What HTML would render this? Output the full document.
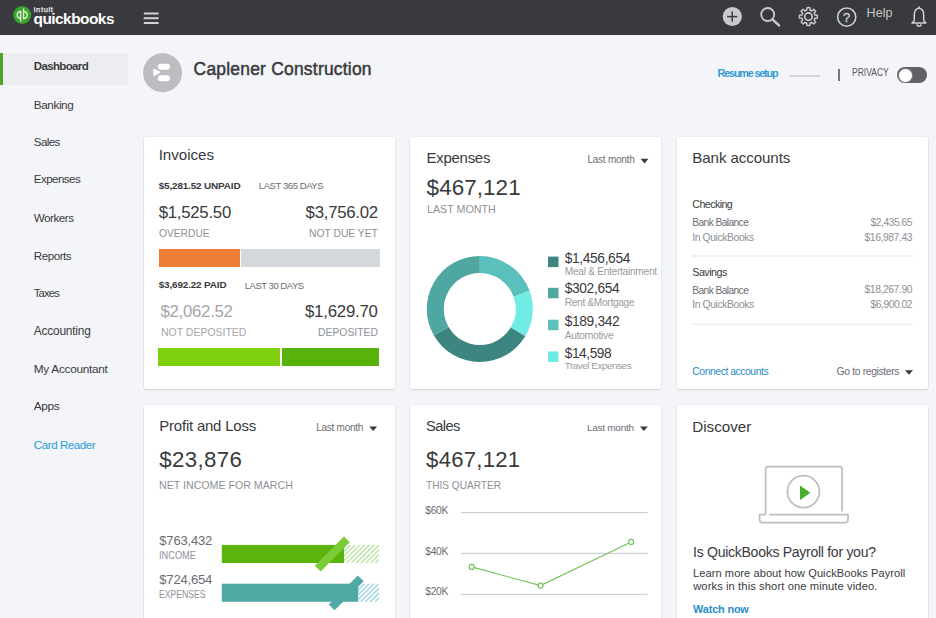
<!DOCTYPE html>
<html><head><meta charset="utf-8">
<style>
*{margin:0;padding:0;box-sizing:border-box}
html,body{width:936px;height:618px;overflow:hidden;background:#f4f5f8;font-family:"Liberation Sans",sans-serif}
.t{position:absolute;white-space:nowrap}
.a{position:absolute}
.card{position:absolute;background:#fff;border-radius:2px;box-shadow:0 0 0 0.5px rgba(0,0,0,0.06),0 1px 2px rgba(0,0,0,0.13)}
</style></head><body>
<!-- top bar -->
<div class="a" style="left:0;top:0;width:936px;height:35px;background:#393a3d"></div>
<svg class="a" style="left:0;top:0" width="936" height="35" viewBox="0 0 936 35">
  <!-- logo -->
  <circle cx="22.2" cy="15" r="9" fill="#3aa52e"/>
  <g fill="none" stroke="#e8f5e0" stroke-width="1.3">
    <path d="M20.5 11.5 A3.3 3.3 0 1 0 20.5 18.3 M19.3 11.5 H20.7 V21.5"/>
    <path d="M23.8 18.5 A3.3 3.3 0 1 0 23.8 11.7 M25 18.5 H23.6 V8.5"/>
  </g>
  <!-- hamburger -->
  <g stroke="#d2d2d4" stroke-width="2">
    <line x1="143.8" y1="13.5" x2="158.6" y2="13.5"/>
    <line x1="143.8" y1="18.2" x2="158.6" y2="18.2"/>
    <line x1="143.8" y1="23" x2="158.6" y2="23"/>
  </g>
  <!-- plus -->
  <circle cx="732.3" cy="16.5" r="9.6" fill="#c9cacc"/>
  <g stroke="#393a3d" stroke-width="1.5"><line x1="727.1" y1="16.6" x2="737.3" y2="16.6"/><line x1="732.2" y1="11.5" x2="732.2" y2="21.7"/></g>
  <!-- search -->
  <g fill="none" stroke="#c9cacc" stroke-width="1.8" stroke-linecap="round">
    <circle cx="767.7" cy="14.5" r="6.5"/>
    <line x1="772.6" y1="19.6" x2="779" y2="25.4" stroke-width="2.6"/>
  </g>
  <!-- gear -->
  <g fill="none" stroke="#c8c9cb" stroke-width="1.5" stroke-linejoin="round">
    <path d="M806.69 10.22 L806.99 7.71 A9.0 9.0 0 0 1 809.81 7.71 L810.11 10.22 A6.6 6.6 0 0 1 811.70 10.88 L811.70 10.88 L813.69 9.32 A9.0 9.0 0 0 1 815.68 11.31 L814.12 13.30 A6.6 6.6 0 0 1 814.78 14.89 L814.78 14.89 L817.29 15.19 A9.0 9.0 0 0 1 817.29 18.01 L814.78 18.31 A6.6 6.6 0 0 1 814.12 19.90 L814.12 19.90 L815.68 21.89 A9.0 9.0 0 0 1 813.69 23.88 L811.70 22.32 A6.6 6.6 0 0 1 810.11 22.98 L810.11 22.98 L809.81 25.49 A9.0 9.0 0 0 1 806.99 25.49 L806.69 22.98 A6.6 6.6 0 0 1 805.10 22.32 L805.10 22.32 L803.11 23.88 A9.0 9.0 0 0 1 801.12 21.89 L802.68 19.90 A6.6 6.6 0 0 1 802.02 18.31 L802.02 18.31 L799.51 18.01 A9.0 9.0 0 0 1 799.51 15.19 L802.02 14.89 A6.6 6.6 0 0 1 802.68 13.30 L802.68 13.30 L801.12 11.31 A9.0 9.0 0 0 1 803.11 9.32 L805.10 10.88 A6.6 6.6 0 0 1 806.69 10.22 Z"/>
    <circle cx="808.4" cy="16.6" r="3.7" stroke-width="1.7"/>
  </g>
  <!-- help circle -->
  <circle cx="846.7" cy="17.1" r="9.1" fill="none" stroke="#d0d0d2" stroke-width="1.6"/>
  <text x="846.7" y="21.7" text-anchor="middle" font-family="Liberation Sans" font-weight="normal" font-size="13" fill="#cdced0" stroke="#cdced0" stroke-width="0.35">?</text>
  <!-- bell -->
  <path d="M919 8 C915.2 8.8 914.3 11.5 914.3 15 V19.5 C914.3 21.3 913 22.3 912 23 H926 C925 22.3 923.7 21.3 923.7 19.5 V15 C923.7 11.5 922.8 8.8 919 8 Z" fill="none" stroke="#d0d0d2" stroke-width="1.5" stroke-linejoin="round"/>
  <path d="M917 24.2 A2 2 0 0 0 921 24.2" fill="none" stroke="#d0d0d2" stroke-width="1.5"/>
  <line x1="919" y1="6.5" x2="919" y2="8" stroke="#d0d0d2" stroke-width="1.5"/>
</svg>

<!-- sidebar highlight -->
<div class="a" style="left:0;top:53px;width:128px;height:32px;background:#ecedf0;border-radius:0 2px 2px 0"></div>
<div class="a" style="left:0;top:53px;width:3px;height:32px;background:#4aa71e"></div>

<!-- company avatar -->
<svg class="a" style="left:142px;top:52px" width="42" height="42" viewBox="0 0 42 42">
  <circle cx="20.6" cy="20.7" r="19.5" fill="#bcbdc0"/>
  <rect x="15.8" y="11.8" width="12.2" height="6" rx="3" fill="#fff"/>
  <rect x="15.8" y="23.2" width="12.2" height="6" rx="3" fill="#fff"/>
  <path d="M12 17.2 L17.8 20.3 L12 23.4 Z" fill="#fff" stroke="#fff" stroke-width="1.2" stroke-linejoin="round"/>
</svg>

<!-- header right -->
<div class="a" style="left:789px;top:75px;width:31px;height:2px;background:#d4d5d8"></div>
<div class="a" style="left:838.2px;top:69.3px;width:1.5px;height:11.5px;background:#77787c"></div>
<div class="a" style="left:897.3px;top:67.3px;width:29.4px;height:15.3px;border-radius:8px;background:#616265"></div>
<div class="a" style="left:898.6px;top:68.5px;width:13px;height:13px;border-radius:50%;background:#fff;box-shadow:0 0 0 0.6px #9a9b9e"></div>

<!-- cards -->
<div class="card" style="left:144px;top:137px;width:251px;height:252px"></div>
<div class="card" style="left:410px;top:137px;width:251px;height:252px"></div>
<div class="card" style="left:677px;top:137px;width:251px;height:252px"></div>
<div class="card" style="left:144px;top:405px;width:251px;height:220px"></div>
<div class="card" style="left:410px;top:405px;width:251px;height:220px"></div>
<div class="card" style="left:677px;top:405px;width:251px;height:220px"></div>

<!-- invoices bars -->
<div class="a" style="left:158.7px;top:248.5px;width:81px;height:18px;background:#ee7d35"></div>
<div class="a" style="left:240.7px;top:248.5px;width:139px;height:18px;background:#d4d7dc"></div>
<div class="a" style="left:158.2px;top:348px;width:122px;height:17.5px;background:#7fd10d"></div>
<div class="a" style="left:282.4px;top:348px;width:96.8px;height:17.5px;background:#59b20c"></div>

<!-- expenses arrow -->
<svg class="a" style="left:0;top:0" width="936" height="618" viewBox="0 0 936 618">
  <path d="M640.6 158.8 H648.4 L644.5 163.4 Z" fill="#393a3d"/>
  <path d="M369.3 426.5 H377.1 L373.2 431.1 Z" fill="#393a3d"/>
  <path d="M640 426.5 H647.8 L643.9 431.1 Z" fill="#393a3d"/>
  <path d="M905 370.2 H913 L909 374.8 Z" fill="#393a3d"/>
  <!-- donut -->
  <g><path d="M479.80 256.00 A53 53 0 0 1 529.60 290.87 L513.63 296.69 A36 36 0 0 0 479.80 273.00 Z" fill="#5bc0bb"/><path d="M529.60 290.87 A53 53 0 0 1 525.23 336.30 L510.66 327.54 A36 36 0 0 0 513.63 296.69 Z" fill="#70ebe6"/><path d="M525.23 336.30 A53 53 0 0 1 433.90 335.50 L448.62 327.00 A36 36 0 0 0 510.66 327.54 Z" fill="#3d8580"/><path d="M433.90 335.50 A53 53 0 0 1 479.80 256.00 L479.80 273.00 A36 36 0 0 0 448.62 327.00 Z" fill="#4ea7a1"/></g>
  <!-- legend squares -->
  <rect x="548" y="256.6" width="10.5" height="10.5" fill="#3d8580"/>
  <rect x="548" y="287.8" width="10.5" height="10.5" fill="#4ea7a1"/>
  <rect x="548" y="319.7" width="10.5" height="10.5" fill="#5bc0bb"/>
  <rect x="548" y="351.4" width="10.5" height="10.5" fill="#6eeae5"/>
  <!-- bank separators -->
  <rect x="692" y="255.5" width="221" height="1" fill="#e3e4e7"/>
  <rect x="692" y="323.7" width="221" height="1" fill="#e3e4e7"/>
  <!-- sales grid -->
  <rect x="461" y="512" width="186.5" height="1.3" fill="#cfd1d5"/>
  <rect x="461" y="552.8" width="186.5" height="1.3" fill="#cfd1d5"/>
  <rect x="461" y="593.8" width="186.5" height="1.3" fill="#cfd1d5"/>
  <polyline points="471.7,566.9 540.6,585.6 631.2,541.9" fill="none" stroke="#74c35a" stroke-width="1.1"/>
  <g fill="#fff" stroke="#74c35a" stroke-width="1.2">
    <circle cx="471.7" cy="566.9" r="2.5"/>
    <circle cx="540.6" cy="585.6" r="2.5"/>
    <circle cx="631.2" cy="541.9" r="2.5"/>
  </g>
  <!-- P&L bars -->
  <defs>
    <pattern id="hg" patternUnits="userSpaceOnUse" width="3.4" height="3.4" patternTransform="rotate(45)">
      <rect width="3.4" height="3.4" fill="#fff"/><rect x="0" width="1.1" height="3.4" fill="#a7dc88"/>
    </pattern>
    <pattern id="ht" patternUnits="userSpaceOnUse" width="3.4" height="3.4" patternTransform="rotate(45)">
      <rect width="3.4" height="3.4" fill="#fff"/><rect x="0" width="1.1" height="3.4" fill="#82c7d6"/>
    </pattern>
  </defs>
  <rect x="221.8" y="544.9" width="122.2" height="18.1" fill="#5bb30b"/>
  <rect x="344" y="544.9" width="35.1" height="18.1" fill="url(#hg)"/>
  <rect x="-20.6" y="-4.1" width="41.2" height="8.2" fill="#7ccc3a" transform="translate(332.3 554) rotate(-45)"/>
  <rect x="221.8" y="583.7" width="136.7" height="18.1" fill="#4fa9a5"/>
  <rect x="358.5" y="583.7" width="20.6" height="18.1" fill="url(#ht)"/>
  <rect x="-20.6" y="-4.1" width="41.2" height="8.2" fill="#4fa9a5" transform="translate(346.2 592.9) rotate(-45)"/>
  <!-- discover laptop -->
  <g fill="none" stroke="#bdbec1" stroke-width="1.7">
    <path d="M765.7 514.3 V468.8 Q765.7 466.6 767.9 466.6 H839.8 Q842 466.6 842 468.8 V511.5"/>
    <path d="M765.7 514.6 H759.6 V519.5 Q759.6 522.6 762.7 522.6 H844.9 Q848 522.6 848 519.5 V514.6 H769.4"/>
    <circle cx="803.4" cy="491.6" r="16"/>
  </g>
  <path d="M800 485.5 L810.3 492.8 L800 500.2 Z" fill="#4cae31"/>
</svg>

<div class="t" style="left:33.50px;top:11.17px;font-size:15.40px;line-height:15.40px;letter-spacing:-0.504px;color:#ffffff;font-weight:bold;">quickbooks</div>
<div class="t" style="left:33.80px;top:6.31px;font-size:7.43px;line-height:7.43px;letter-spacing:0.665px;color:#f0f0f0;font-weight:normal;-webkit-text-stroke:0.25px #f0f0f0">intuit</div>
<div class="t" style="left:866.50px;top:6.99px;font-size:12.54px;line-height:12.54px;letter-spacing:0.077px;color:#c4c5c7;font-weight:normal;">Help</div>
<div class="t" style="left:33.80px;top:60.75px;font-size:11.51px;line-height:11.51px;letter-spacing:-0.646px;color:#393a3d;font-weight:bold;">Dashboard</div>
<div class="t" style="left:33.80px;top:98.97px;font-size:11.73px;line-height:11.73px;letter-spacing:-0.401px;color:#393a3d;font-weight:normal;">Banking</div>
<div class="t" style="left:33.80px;top:136.53px;font-size:11.54px;line-height:11.54px;letter-spacing:-0.590px;color:#393a3d;font-weight:normal;">Sales</div>
<div class="t" style="left:33.80px;top:174.39px;font-size:11.59px;line-height:11.59px;letter-spacing:-0.552px;color:#393a3d;font-weight:normal;">Expenses</div>
<div class="t" style="left:33.80px;top:211.93px;font-size:11.66px;line-height:11.66px;letter-spacing:-0.480px;color:#393a3d;font-weight:normal;">Workers</div>
<div class="t" style="left:33.80px;top:249.76px;font-size:11.62px;line-height:11.62px;letter-spacing:-0.481px;color:#393a3d;font-weight:normal;">Reports</div>
<div class="t" style="left:33.80px;top:287.94px;font-size:11.29px;line-height:11.29px;letter-spacing:-0.866px;color:#393a3d;font-weight:normal;">Taxes</div>
<div class="t" style="left:33.80px;top:325.61px;font-size:11.92px;line-height:11.92px;letter-spacing:-0.211px;color:#393a3d;font-weight:normal;">Accounting</div>
<div class="t" style="left:33.80px;top:363.59px;font-size:11.82px;line-height:11.82px;letter-spacing:-0.288px;color:#393a3d;font-weight:normal;">My Accountant</div>
<div class="t" style="left:33.80px;top:401.49px;font-size:11.83px;line-height:11.83px;letter-spacing:-0.391px;color:#393a3d;font-weight:normal;">Apps</div>
<div class="t" style="left:33.80px;top:439.25px;font-size:11.64px;line-height:11.64px;letter-spacing:-0.462px;color:#2a9bd8;font-weight:normal;">Card Reader</div>
<div class="t" style="left:193.60px;top:61.44px;font-size:17.44px;line-height:17.44px;letter-spacing:0.223px;color:#3a3b3e;font-weight:normal;-webkit-text-stroke:0.5px #3a3b3e">Caplener Construction</div>
<div class="t" style="left:717.60px;top:68.04px;font-size:10.82px;line-height:10.82px;letter-spacing:-1.180px;color:#3399d6;font-weight:bold;">Resume setup</div>
<div class="t" style="left:851.80px;top:67.67px;font-size:10.43px;line-height:10.43px;transform:scaleX(0.8173);transform-origin:0 0;color:#555659;font-weight:normal;">PRIVACY</div>
<div class="t" style="left:158.70px;top:146.87px;font-size:15.16px;line-height:15.16px;letter-spacing:-0.047px;color:#393a3d;font-weight:normal;">Invoices</div>
<div class="t" style="left:158.70px;top:181.18px;font-size:9.95px;line-height:9.95px;letter-spacing:-0.163px;color:#393a3d;font-weight:bold;">$5,281.52 UNPAID</div>
<div class="t" style="left:258.80px;top:181.46px;font-size:9.62px;line-height:9.62px;letter-spacing:-0.481px;color:#6b6c72;font-weight:normal;">LAST 365 DAYS</div>
<div class="t" style="left:158.70px;top:204.99px;font-size:16.79px;line-height:16.79px;letter-spacing:-0.263px;color:#393a3d;font-weight:normal;">$1,525.50</div>
<div class="t" style="left:305.60px;top:204.99px;font-size:16.79px;line-height:16.79px;letter-spacing:-0.263px;color:#393a3d;font-weight:normal;">$3,756.02</div>
<div class="t" style="left:158.70px;top:227.89px;font-size:11.59px;line-height:11.59px;transform:scaleX(0.8843);transform-origin:0 0;color:#8d9096;font-weight:normal;">OVERDUE</div>
<div class="t" style="left:309.00px;top:227.89px;font-size:11.59px;line-height:11.59px;transform:scaleX(0.8902);transform-origin:0 0;color:#8d9096;font-weight:normal;">NOT DUE YET</div>
<div class="t" style="left:158.70px;top:280.48px;font-size:9.95px;line-height:9.95px;letter-spacing:-0.158px;color:#393a3d;font-weight:bold;">$3,692.22 PAID</div>
<div class="t" style="left:244.70px;top:280.78px;font-size:9.59px;line-height:9.59px;letter-spacing:-0.512px;color:#6b6c72;font-weight:normal;">LAST 30 DAYS</div>
<div class="t" style="left:160.50px;top:304.30px;font-size:16.78px;line-height:16.78px;letter-spacing:-0.270px;color:#a4a6aa;font-weight:normal;">$2,062.52</div>
<div class="t" style="left:305.00px;top:304.26px;font-size:16.82px;line-height:16.82px;letter-spacing:-0.233px;color:#393a3d;font-weight:normal;">$1,629.70</div>
<div class="t" style="left:160.50px;top:326.71px;font-size:11.45px;line-height:11.45px;transform:scaleX(0.9163);transform-origin:0 0;color:#a4a6aa;font-weight:normal;">NOT DEPOSITED</div>
<div class="t" style="left:318.00px;top:326.71px;font-size:11.45px;line-height:11.45px;transform:scaleX(0.9067);transform-origin:0 0;color:#8d9096;font-weight:normal;">DEPOSITED</div>
<div class="t" style="left:426.60px;top:151.15px;font-size:14.94px;line-height:14.94px;letter-spacing:-0.258px;color:#393a3d;font-weight:normal;">Expenses</div>
<div class="t" style="left:587.50px;top:155.24px;font-size:9.99px;line-height:9.99px;letter-spacing:-0.246px;color:#6b6c72;font-weight:normal;">Last month</div>
<div class="t" style="left:426.60px;top:176.53px;font-size:22.41px;line-height:22.41px;letter-spacing:0.080px;color:#393a3d;font-weight:normal;">$467,121</div>
<div class="t" style="left:426.60px;top:204.99px;font-size:10.29px;line-height:10.29px;transform:scaleX(1.0391);transform-origin:0 0;color:#8d9096;font-weight:normal;">LAST MONTH</div>
<div class="t" style="left:564.70px;top:251.54px;font-size:13.77px;line-height:13.77px;letter-spacing:-0.359px;color:#393a3d;font-weight:normal;">$1,456,654</div>
<div class="t" style="left:564.70px;top:266.67px;font-size:10.20px;line-height:10.20px;letter-spacing:-0.291px;color:#9a9ca0;font-weight:normal;">Meal &amp; Entertainment</div>
<div class="t" style="left:564.70px;top:282.32px;font-size:13.80px;line-height:13.80px;letter-spacing:-0.362px;color:#393a3d;font-weight:normal;">$302,654</div>
<div class="t" style="left:564.70px;top:298.17px;font-size:10.19px;line-height:10.19px;letter-spacing:-0.324px;color:#9a9ca0;font-weight:normal;">Rent &amp;Mortgage</div>
<div class="t" style="left:564.70px;top:314.82px;font-size:13.80px;line-height:13.80px;letter-spacing:-0.362px;color:#393a3d;font-weight:normal;">$189,342</div>
<div class="t" style="left:564.70px;top:330.51px;font-size:10.26px;line-height:10.26px;letter-spacing:-0.263px;color:#9a9ca0;font-weight:normal;">Automotive</div>
<div class="t" style="left:564.70px;top:346.78px;font-size:13.72px;line-height:13.72px;letter-spacing:-0.434px;color:#393a3d;font-weight:normal;">$14,598</div>
<div class="t" style="left:564.70px;top:361.36px;font-size:9.96px;line-height:9.96px;letter-spacing:-0.488px;color:#9a9ca0;font-weight:normal;">Travel Expenses</div>
<div class="t" style="left:692.30px;top:149.91px;font-size:15.11px;line-height:15.11px;letter-spacing:-0.091px;color:#393a3d;font-weight:normal;">Bank accounts</div>
<div class="t" style="left:692.30px;top:199.07px;font-size:10.67px;line-height:10.67px;letter-spacing:-0.569px;color:#393a3d;font-weight:normal;">Checking</div>
<div class="t" style="left:692.30px;top:218.37px;font-size:10.19px;line-height:10.19px;letter-spacing:-0.571px;color:#6b6c72;font-weight:normal;">Bank Balance</div>
<div class="t" style="left:870.50px;top:218.28px;font-size:10.30px;line-height:10.30px;letter-spacing:-0.478px;color:#8d9096;font-weight:normal;">$2,435.65</div>
<div class="t" style="left:692.30px;top:233.02px;font-size:10.37px;line-height:10.37px;letter-spacing:-0.403px;color:#8d9096;font-weight:normal;">In QuickBooks</div>
<div class="t" style="left:864.50px;top:233.03px;font-size:10.36px;line-height:10.36px;letter-spacing:-0.427px;color:#8d9096;font-weight:normal;">$16,987.43</div>
<div class="t" style="left:692.30px;top:266.53px;font-size:10.72px;line-height:10.72px;letter-spacing:-0.524px;color:#393a3d;font-weight:normal;">Savings</div>
<div class="t" style="left:692.30px;top:285.57px;font-size:10.19px;line-height:10.19px;letter-spacing:-0.571px;color:#6b6c72;font-weight:normal;">Bank Balance</div>
<div class="t" style="left:864.50px;top:285.43px;font-size:10.36px;line-height:10.36px;letter-spacing:-0.427px;color:#8d9096;font-weight:normal;">$18,267.90</div>
<div class="t" style="left:692.30px;top:300.12px;font-size:10.37px;line-height:10.37px;letter-spacing:-0.403px;color:#8d9096;font-weight:normal;">In QuickBooks</div>
<div class="t" style="left:870.50px;top:300.18px;font-size:10.30px;line-height:10.30px;letter-spacing:-0.478px;color:#8d9096;font-weight:normal;">$6,900.02</div>
<div class="t" style="left:692.30px;top:367.07px;font-size:10.43px;line-height:10.43px;letter-spacing:-0.471px;color:#2a8dc8;font-weight:normal;">Connect accounts</div>
<div class="t" style="left:836.60px;top:367.05px;font-size:10.45px;line-height:10.45px;letter-spacing:-0.397px;color:#6b6c72;font-weight:normal;">Go to registers</div>
<div class="t" style="left:159.30px;top:419.16px;font-size:14.94px;line-height:14.94px;letter-spacing:-0.201px;color:#393a3d;font-weight:normal;">Profit and Loss</div>
<div class="t" style="left:316.20px;top:422.74px;font-size:9.99px;line-height:9.99px;letter-spacing:-0.246px;color:#6b6c72;font-weight:normal;">Last month</div>
<div class="t" style="left:159.30px;top:449.15px;font-size:22.27px;line-height:22.27px;letter-spacing:0.349px;color:#393a3d;font-weight:normal;">$23,876</div>
<div class="t" style="left:159.30px;top:480.97px;font-size:10.43px;line-height:10.43px;transform:scaleX(1.0196);transform-origin:0 0;color:#8d9096;font-weight:normal;">NET INCOME FOR MARCH</div>
<div class="t" style="left:159.30px;top:534.42px;font-size:13.08px;line-height:13.08px;letter-spacing:-0.223px;color:#6b6c72;font-weight:normal;">$763,432</div>
<div class="t" style="left:159.30px;top:551.11px;font-size:10.14px;line-height:10.14px;transform:scaleX(0.9118);transform-origin:0 0;color:#8d9096;font-weight:normal;">INCOME</div>
<div class="t" style="left:159.30px;top:573.32px;font-size:13.08px;line-height:13.08px;letter-spacing:-0.223px;color:#6b6c72;font-weight:normal;">$724,654</div>
<div class="t" style="left:159.30px;top:590.13px;font-size:10.00px;line-height:10.00px;transform:scaleX(0.8627);transform-origin:0 0;color:#8d9096;font-weight:normal;">EXPENSES</div>
<div class="t" style="left:426.10px;top:419.43px;font-size:14.62px;line-height:14.62px;letter-spacing:-0.562px;color:#393a3d;font-weight:normal;">Sales</div>
<div class="t" style="left:587.00px;top:422.76px;font-size:9.98px;line-height:9.98px;letter-spacing:-0.259px;color:#6b6c72;font-weight:normal;">Last month</div>
<div class="t" style="left:426.10px;top:449.25px;font-size:22.15px;line-height:22.15px;letter-spacing:0.235px;color:#393a3d;font-weight:normal;">$467,121</div>
<div class="t" style="left:426.10px;top:480.97px;font-size:10.43px;line-height:10.43px;transform:scaleX(0.9680);transform-origin:0 0;color:#8d9096;font-weight:normal;">THIS QUARTER</div>
<div class="t" style="left:425.30px;top:505.59px;font-size:10.29px;line-height:10.29px;letter-spacing:-0.341px;color:#6b6c72;font-weight:normal;">$60K</div>
<div class="t" style="left:425.30px;top:546.59px;font-size:10.29px;line-height:10.29px;letter-spacing:-0.341px;color:#6b6c72;font-weight:normal;">$40K</div>
<div class="t" style="left:425.30px;top:586.89px;font-size:10.29px;line-height:10.29px;letter-spacing:-0.341px;color:#6b6c72;font-weight:normal;">$20K</div>
<div class="t" style="left:692.30px;top:418.94px;font-size:15.20px;line-height:15.20px;letter-spacing:-0.017px;color:#393a3d;font-weight:normal;">Discover</div>
<div class="t" style="left:693.10px;top:544.89px;font-size:14.07px;line-height:14.07px;letter-spacing:-0.296px;color:#393a3d;font-weight:normal;">Is QuickBooks Payroll for you?</div>
<div class="t" style="left:693.10px;top:568.11px;font-size:11.09px;line-height:11.09px;letter-spacing:0.057px;color:#393a3d;font-weight:normal;">Learn more about how QuickBooks Payroll</div>
<div class="t" style="left:693.16px;top:580.84px;font-size:11.17px;line-height:11.17px;letter-spacing:0.105px;color:#393a3d;font-weight:normal;">works in this short one minute video.</div>
<div class="t" style="left:693.10px;top:603.90px;font-size:10.86px;line-height:10.86px;letter-spacing:-0.148px;color:#2a8dc8;font-weight:bold;">Watch now</div>
</body></html>
